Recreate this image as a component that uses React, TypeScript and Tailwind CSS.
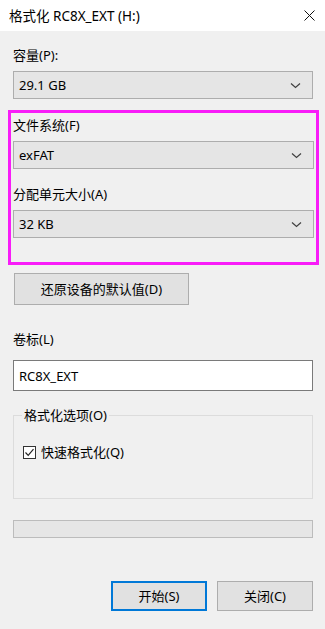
import React, { useState } from 'react';

const font = { fontFamily: '"Noto Sans", "Noto Sans CJK SC", sans-serif' };

const Chevron: React.FC = () => (
  <svg width="11" height="7" viewBox="0 0 11 7" className="text-[#404040]">
    <path d="M1 1.5 L5.5 5.5 L10 1.5" fill="none" stroke="currentColor" strokeWidth="1.2" />
  </svg>
);

const Combo: React.FC<{ value: string }> = ({ value }) => (
  <div className="flex h-[28px] w-full items-center justify-between border border-[#adadad] bg-[#e5e5e5] pl-[5px] pr-[11px] text-[13px] leading-none text-black">
    <span>{value}</span>
    <Chevron />
  </div>
);

const Label: React.FC<{ children: React.ReactNode; className?: string }> = ({ children, className = '' }) => (
  <div className={`h-[16px] text-[13px] leading-[16px] text-black ${className}`}>{children}</div>
);

const App: React.FC = () => {
  const [quick, setQuick] = useState(true);
  const [label, setLabel] = useState('RC8X_EXT');

  return (
    <div className="flex h-[629px] w-[325px] flex-col bg-[#f0f0f0]" style={font}>
      <div className="flex h-[31px] items-center justify-between bg-white pl-[9px] pr-[10px]">
        <span className="text-[13.5px] leading-[16px] text-black">格式化 RC8X_EXT (H:)</span>
        <svg width="11" height="11" viewBox="0 0 11 11">
          <path d="M0.5 0.5 L10.5 10.5 M10.5 0.5 L0.5 10.5" stroke="#111" strokeWidth="1" />
        </svg>
      </div>

      <div className="flex flex-col px-[12px]">
        <Label className="mt-[16px] ml-[1px]">容量(P):</Label>
        <div className="mt-[8px] ml-[1px]">
          <Combo value="29.1 GB" />
        </div>

        <div className="mt-[11px] ml-[-4px] mr-[-6px] flex flex-col border-[3px] border-[#f81cf8] pl-[2px] pr-[2px] pt-[4px] pb-[24px]">
          <Label>文件系统(F)</Label>
          <div className="mt-[8px]">
            <Combo value="exFAT" />
          </div>
          <Label className="mt-[17px]">分配单元大小(A)</Label>
          <div className="mt-[8px]">
            <Combo value="32 KB" />
          </div>
        </div>

        <button className="mt-[8px] ml-[2px] h-[32px] w-[175px] border border-[#adadad] bg-[#e1e1e1] text-[13px] leading-[16px] text-black">
          还原设备的默认值(D)
        </button>

        <Label className="mt-[26px] ml-[1px]">卷标(L)</Label>
        <input
          value={label}
          onChange={e => setLabel(e.target.value)}
          className="mt-[13px] ml-[1px] h-[31px] w-[300px] border border-[#7a7a7a] bg-white px-[5px] text-[13px] text-black outline-none"
        />

        <div className="relative mt-[24px] ml-[1px] h-[84px] w-[300px] border border-[#dcdcdc]">
          <span className="absolute left-[8px] top-[-9px] bg-[#f0f0f0] px-[2px] text-[13px] leading-[16px] text-black">
            格式化选项(O)
          </span>
          <label className="mt-[28px] ml-[9px] flex items-center gap-[5px] text-[13px] leading-[16px] text-black">
            <span
              onClick={() => setQuick(q => !q)}
              className="flex h-[13px] w-[13px] items-center justify-center border border-[#333] bg-white"
            >
              {quick && (
                <svg width="11" height="11" viewBox="0 0 11 11">
                  <path d="M1.5 5.5 L4.2 8.3 L9.5 2.2" fill="none" stroke="#222" strokeWidth="1.2" />
                </svg>
              )}
            </span>
            快速格式化(Q)
          </label>
        </div>

        <div className="mt-[21px] ml-[1px] h-[18px] w-[300px] border border-[#bcbcbc] bg-[#e6e6e6]" />

        <div className="mt-[43px] ml-[1px] flex w-[300px] justify-end gap-[10px]">
          <button className="h-[30px] w-[96px] border-2 border-[#0078d7] bg-[#e1e1e1] text-[13px] leading-[16px] text-black">
            开始(S)
          </button>
          <button className="h-[30px] w-[96px] border border-[#adadad] bg-[#e1e1e1] text-[13px] leading-[16px] text-black">
            关闭(C)
          </button>
        </div>
      </div>
    </div>
  );
};

export default App;
